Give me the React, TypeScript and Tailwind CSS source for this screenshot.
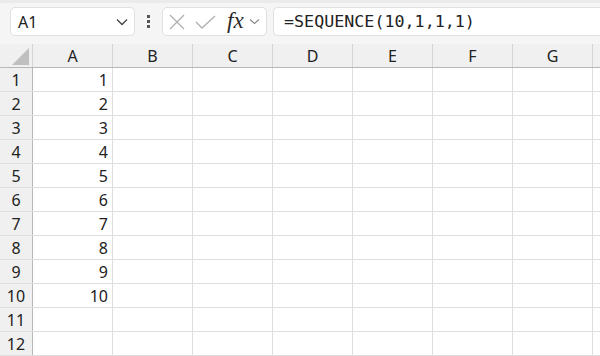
import React from "react";

const cols = ["A", "B", "C", "D", "E", "F", "G"];
const rows = Array.from({ length: 12 }, (_, i) => i + 1);

export default function App() {
  return (
    <div
      className="w-[600px] h-[356px] overflow-hidden bg-white text-[#1f1f1f]"
      style={{ fontFamily: '"Noto Sans", "Open Sans", sans-serif' }}
    >
      {/* Formula bar */}
      <div className="h-[44px] bg-[#f5f5f5] border-t-[3px] border-[#ebebeb] flex items-start pt-[4px]">
        <div className="ml-[10px] w-[125px] h-[29px] bg-white border border-[#e0e0e0] rounded-[5px] flex items-center pl-[7px] pr-[6px]">
          <span className="text-[16px] text-[#222]">A1</span>
          <svg className="ml-auto" width="12" height="8" viewBox="0 0 12 8">
            <path d="M1 1.5 L6 6.5 L11 1.5" fill="none" stroke="#444" strokeWidth="1.3" />
          </svg>
        </div>
        <div className="w-[27px] h-[29px] flex flex-col items-center justify-center gap-[2px]">
          <div className="w-[3px] h-[3px] bg-[#555]" />
          <div className="w-[3px] h-[3px] bg-[#555]" />
          <div className="w-[3px] h-[3px] bg-[#555]" />
        </div>
        <div className="w-[105px] h-[29px] bg-white border border-[#e0e0e0] rounded-[5px] flex items-center pl-[6px]">
          <svg width="16" height="16" viewBox="0 0 16 16">
            <path d="M1 1 L15 15 M15 1 L1 15" stroke="#b0b0b0" strokeWidth="1.3" />
          </svg>
          <svg className="ml-[10px]" width="21" height="14" viewBox="0 0 21 14">
            <path d="M1 7 L7 13 L20 1" fill="none" stroke="#b0b0b0" strokeWidth="1.3" />
          </svg>
          <span
            className="ml-[11px] text-[23px] italic leading-none text-[#2a2a2a] -mt-[2px]"
            style={{ fontFamily: '"Liberation Serif", serif' }}
          >
            fx
          </span>
          <svg className="ml-[5px]" width="11" height="7" viewBox="0 0 11 7">
            <path d="M1 1.5 L5.5 5.5 L10 1.5" fill="none" stroke="#888" strokeWidth="1.1" />
          </svg>
        </div>
        <div className="ml-[6px] flex-1 h-[29px] bg-white border border-[#e0e0e0] border-r-0 rounded-l-[5px] flex items-center pl-[10px]">
          <span
            className="text-[16.7px] text-[#222]"
            style={{ fontFamily: '"DejaVu Sans Mono", "Liberation Mono", monospace' }}
          >
            =SEQUENCE(10,1,1,1)
          </span>
        </div>
      </div>

      {/* Grid */}
      <div className="flex flex-col">
        <div className="flex h-[24px] bg-[#f0f0f0] border-b border-[#b8b8b8]">
          <div className="w-[33px] shrink-0 border-r border-[#d4d4d4] relative">
            <svg className="absolute right-[3px] bottom-[2px]" width="17" height="17" viewBox="0 0 17 17">
              <path d="M17 0 L17 17 L0 17 Z" fill="#c0c0c0" />
            </svg>
          </div>
          {cols.map((c) => (
            <div
              key={c}
              className="w-[80px] shrink-0 border-r border-[#d4d4d4] flex items-center justify-center text-[16px] text-[#222]"
            >
              {c}
            </div>
          ))}
          <div className="flex-1" />
        </div>
        {rows.map((r) => (
          <div key={r} className="flex h-[24px] border-b border-[#dedede]">
            <div className="w-[33px] shrink-0 bg-[#f0f0f0] border-r border-[#b8b8b8] flex items-center justify-center text-[16px] text-[#222]">
              {r}
            </div>
            {cols.map((c) => (
              <div
                key={c}
                className="w-[80px] shrink-0 border-r border-[#dedede] flex items-center justify-end pr-[4px] text-[16px] text-[#222]"
              >
                {c === "A" && r <= 10 ? r : ""}
              </div>
            ))}
            <div className="flex-1" />
          </div>
        ))}
      </div>
    </div>
  );
}
